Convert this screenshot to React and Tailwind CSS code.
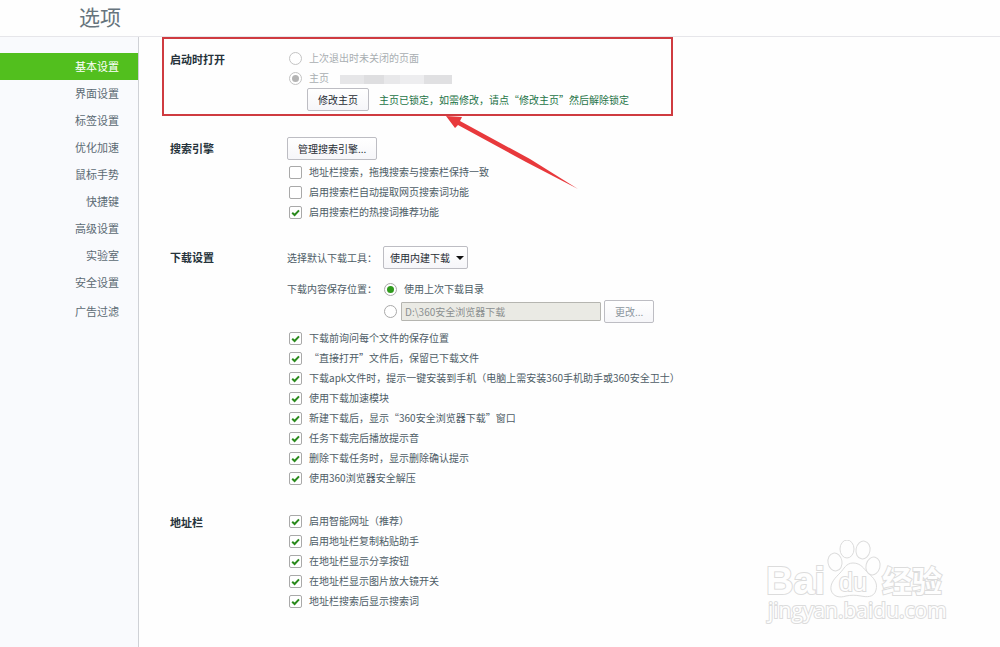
import React, { useState } from "react";

const menu = [
  "基本设置",
  "界面设置",
  "标签设置",
  "优化加速",
  "鼠标手势",
  "快捷键",
  "高级设置",
  "实验室",
  "安全设置",
  "广告过滤",
];

const searchOptions = [
  { text: "地址栏搜索，拖拽搜索与搜索栏保持一致", on: false },
  { text: "启用搜索栏自动提取网页搜索词功能", on: false },
  { text: "启用搜索栏的热搜词推荐功能", on: true },
];

const downloadOptions = [
  { text: "下载前询问每个文件的保存位置", on: true },
  { text: "“直接打开”文件后，保留已下载文件", on: true },
  { text: "下载apk文件时，提示一键安装到手机（电脑上需安装360手机助手或360安全卫士）", on: true },
  { text: "使用下载加速模块", on: true },
  { text: "新建下载后，显示“360安全浏览器下载”窗口", on: true },
  { text: "任务下载完后播放提示音", on: true },
  { text: "删除下载任务时，显示删除确认提示", on: true },
  { text: "使用360浏览器安全解压", on: true },
];

const addressOptions = [
  { text: "启用智能网址（推荐）", on: true },
  { text: "启用地址栏复制粘贴助手", on: true },
  { text: "在地址栏显示分享按钮", on: true },
  { text: "在地址栏显示图片放大镜开关", on: true },
  { text: "地址栏搜索后显示搜索词", on: true },
];

function Section({ title, className = "", children }) {
  return (
    <section className={`flex items-start ${className}`}>
      <h2 className="w-[117px] shrink-0 text-[11px] leading-[22px] font-bold text-[#26333b]">{title}</h2>
      <div className="min-w-0 flex-1">{children}</div>
    </section>
  );
}

function CheckRow({ text, on }) {
  const [checked, setChecked] = useState(on);
  return (
    <label className="flex h-5 items-center gap-[7px] pl-0.5 whitespace-nowrap">
      <span className="relative size-[13px] shrink-0">
        <input
          type="checkbox"
          checked={checked}
          onChange={() => setChecked(!checked)}
          className="block size-[13px] appearance-none rounded-[2px] border border-[#a9a9a9] bg-white"
        />
        {checked && (
          <svg viewBox="0 0 13 13" className="pointer-events-none absolute inset-0 size-[13px]">
            <path d="M3.2 6.7 L5.6 9 L10 4.4" fill="none" stroke="#2a8a1c" strokeWidth="2" />
          </svg>
        )}
      </span>
      {text}
    </label>
  );
}

function CheckList({ items }) {
  return items.map(i => <CheckRow key={i.text} text={i.text} on={i.on} />);
}

function Radio(props) {
  return (
    <input
      type="radio"
      className="grid size-[13px] shrink-0 appearance-none place-items-center rounded-full border border-[#a9a9a9] bg-white checked:before:size-[7px] checked:before:rounded-full checked:before:bg-[#2f9a1c] disabled:border-[#c4c4c4] disabled:checked:before:bg-[#b4b4b4]"
      {...props}
    />
  );
}

function Button({ children, ...rest }) {
  return (
    <button
      type="button"
      className="h-[23px] shrink-0 rounded-[2px] border border-[#bdbdc3] bg-linear-to-b from-white to-[#f6f6f9] px-[10px] whitespace-nowrap text-[#1f2b33] disabled:text-[#8b959d]"
      {...rest}
    >
      {children}
    </button>
  );
}

function Watermark() {
  return (
    <svg
      viewBox="0 0 200 100"
      className="pointer-events-none absolute right-[40px] bottom-[7px] h-[100px] w-[200px]"
      fill="#fefefe"
      stroke="#dcdcdc"
      strokeWidth="1"
    >
      <g strokeWidth="2" paintOrder="stroke">
        <text x="6" y="54" fontSize="38" fontWeight="bold" fontFamily="Liberation Sans, sans-serif">Bai</text>
        <text x="122" y="52" fontSize="30" fontWeight="bold" fontFamily="Noto Sans CJK SC, sans-serif">经验</text>
        <text x="8" y="78" fontSize="21" fontFamily="Open Sans, sans-serif">jingyan.baidu.com</text>
      </g>
      <path d="M93 23 C101 23 104 29 108 33 C114 38 118 43 116 50 C114 58 106 57 101 56 C95 55 91 55 86 56 C80 58 73 57 71 50 C70 43 75 38 80 33 C84 29 86 23 93 23 Z" />
      <ellipse cx="75" cy="22" rx="7" ry="9" transform="rotate(-10 75 22)" />
      <ellipse cx="87" cy="9" rx="7" ry="9" />
      <ellipse cx="103" cy="10" rx="7" ry="9" transform="rotate(10 103 10)" />
      <ellipse cx="113" cy="26" rx="7" ry="9" transform="rotate(14 113 26)" />
      <text x="79" y="51" fontSize="25" fontFamily="Liberation Sans, sans-serif" strokeWidth="2" paintOrder="stroke">du</text>
    </svg>
  );
}

export default function App() {
  const [active, setActive] = useState("基本设置");
  const [place, setPlace] = useState("last");

  return (
    <div className="relative flex min-h-screen flex-col bg-[#fefefe] font-['Noto_Sans_CJK_SC',sans-serif] text-[10px] leading-5 text-[#4d5c66]">
      <header className="h-[37px] border-b border-[#e6e6ea] pl-[79px]">
        <h1 className="text-[21px] leading-8 text-[#66747d]">选项</h1>
      </header>

      <div className="flex flex-1">
        <nav className="w-[139px] shrink-0 border-r border-[#cfd1d6] bg-[#f9fafd] pt-4 text-[11px]">
          {menu.map(m => (
            <a
              key={m}
              href="#"
              onClick={() => setActive(m)}
              className={
                "block pr-[19px] text-right leading-[27px] last:mt-0.5 " +
                (m === active ? "bg-[#52bf1e] text-white" : "text-[#5c6a74]")
              }
            >
              {m}
            </a>
          ))}
        </nav>

        <main className="relative min-w-0 flex-1 pt-[11px] pl-[31px]">
          <Section title="启动时打开">
            <label className="flex h-5 items-center gap-[7px] pl-0.5 text-[#a9aeb2]">
              <Radio name="startup" disabled />
              上次退出时未关闭的页面
            </label>
            <div className="flex h-5 items-center">
              <label className="flex items-center gap-[7px] pl-0.5 text-[#a9aeb2]">
                <Radio name="startup" defaultChecked disabled />
                主页
              </label>
              {/* blurred home page address */}
              <div className="mt-[3px] ml-[11px] flex h-[9px]">
                <span className="w-6 bg-[#e6e6e8]" />
                <span className="w-5 bg-[#dedee0]" />
                <span className="w-4 bg-[#e8e8ea]" />
                <span className="w-6 bg-[#ededef]" />
                <span className="w-7 bg-[#e0e0e2]" />
              </div>
            </div>
            <div className="flex items-center gap-[10px] pl-5">
              <Button>修改主页</Button>
              <span className="whitespace-nowrap text-[#1d7346]">
                主页已锁定，如需修改，请点“修改主页”然后解除锁定
              </span>
            </div>
          </Section>

          <Section title="搜索引擎" className="mt-[26px]">
            <div className="mb-0.5 flex">
              <Button>管理搜索引擎...</Button>
            </div>
            <CheckList items={searchOptions} />
          </Section>

          <Section title="下载设置" className="mt-6">
            <div className="flex items-center">
              <label htmlFor="tool" className="w-24 shrink-0">选择默认下载工具：</label>
              <div className="relative">
                <select
                  id="tool"
                  className="block h-[23px] w-[85px] appearance-none rounded-[2px] border border-[#bdbdc3] bg-linear-to-b from-white to-[#f6f6f9] pl-[6px] text-[#1f2b33]"
                >
                  <option>使用内建下载</option>
                </select>
                <svg viewBox="0 0 8 4" className="pointer-events-none absolute top-[10px] right-1 h-1 w-2">
                  <path d="M0 0H8L4 4Z" fill="#111" />
                </svg>
              </div>
            </div>

            <div className="mt-[10px] flex">
              <span className="w-[97px] shrink-0">下载内容保存位置：</span>
              <div>
                <label className="flex h-5 items-center gap-[7px]">
                  <Radio name="place" checked={place === "last"} onChange={() => setPlace("last")} />
                  使用上次下载目录
                </label>
                <div className="mt-px flex items-center">
                  <Radio
                    name="place"
                    aria-label="指定目录"
                    checked={place === "dir"}
                    onChange={() => setPlace("dir")}
                  />
                  <input
                    type="text"
                    aria-label="下载目录"
                    disabled
                    value="D:\360安全浏览器下载"
                    className="mr-[3px] ml-1 h-[19px] w-[200px] rounded-[1px] border border-[#b5b5b0] bg-[#eaeae4] px-[3px] text-[#8a8f90]"
                  />
                  <Button disabled>更改...</Button>
                </div>
              </div>
            </div>

            <div className="mt-[5px]">
              <CheckList items={downloadOptions} />
            </div>
          </Section>

          <Section title="地址栏" className="mt-[23px]">
            <CheckList items={addressOptions} />
          </Section>

          {/* callout frame and arrow drawn over the startup section */}
          <div className="pointer-events-none absolute top-0 left-[23px] h-[79px] w-[511px] border-2 border-[#cf3b40]" />
          <svg viewBox="0 0 132 74" className="pointer-events-none absolute top-[79px] left-[307px] h-[74px] w-[132px]">
            <path d="M0 0 L16 1 L14 5 L84 43 L132 73 L80 46 L12 9 L9 12 Z" fill="#e8393c" />
          </svg>
        </main>
      </div>

      <Watermark />
    </div>
  );
}
